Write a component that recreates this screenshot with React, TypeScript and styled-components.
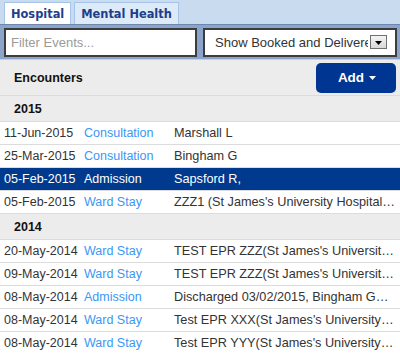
import React from "react";
import styled, { createGlobalStyle } from "styled-components";

const Global = createGlobalStyle`
  html, body { margin: 0; padding: 0; background: #ececec; }
  body { font-family: "Liberation Sans", Arial, sans-serif; }
  * { box-sizing: border-box; }
`;

const Page = styled.div`
  width: 400px;
  height: 353px;
  overflow: hidden;
  background: #ececec;
`;

const TabStrip = styled.div`
  height: 24px;
  background: #c9dbee;
  display: flex;
  align-items: flex-end;
  gap: 3px;
  padding-left: 4px;
`;

const Tab = styled.div<{ $active?: boolean }>`
  height: 22px;
  padding: 0 6px;
  border: 1px solid #a6c3e9;
  border-bottom: none;
  background: ${(p) => (p.$active ? "#ffffff" : "#dcebf7")};
  color: #1f3d8b;
  font-family: "DejaVu Sans", Verdana, sans-serif;
  font-weight: bold;
  font-size: 11.4px;
  display: flex;
  align-items: center;
`;

const FilterBar = styled.div`
  height: 36px;
  background: #8aa4cc;
  border-top: 1px solid #6f86ad;
  border-bottom: 1px solid #cfcfcf;
  display: flex;
  align-items: center;
  gap: 6px;
  padding: 0 3px 0 4px;
`;

const FilterInput = styled.input`
  flex: 0 0 193px;
  width: 193px;
  height: 29px;
  border: 2px solid #3c3c3c;
  background: #fff;
  padding: 0 5px;
  font-family: "Liberation Sans", Arial, sans-serif;
  font-size: 13px;
  color: #333;
  outline: none;
  &::placeholder { color: #9a9a9a; }
`;

const SelectBox = styled.div`
  flex: 1;
  min-width: 0;
  height: 29px;
  border: 2px solid #3c3c3c;
  background: #fff;
  display: flex;
  align-items: center;
  padding: 0 8px 0 10px;
  gap: 2px;
`;

const SelectText = styled.span`
  flex: 1;
  min-width: 0;
  overflow: hidden;
  white-space: nowrap;
  font-size: 13px;
  color: #333;
`;

const ArrowBox = styled.span`
  flex: 0 0 17px;
  width: 17px;
  height: 14px;
  border: 1px solid #707070;
  background: linear-gradient(#f4f4f4, #d8d8d8);
  display: flex;
  align-items: flex-end;
  justify-content: center;
  padding-bottom: 3px;
`;

const Header = styled.div`
  height: 35px;
  display: flex;
  align-items: center;
  justify-content: space-between;
  padding: 0 4px 0 14px;
`;

const Title = styled.span`
  font-weight: bold;
  font-size: 12.5px;
  color: #111;
`;

const AddButton = styled.button`
  width: 80px;
  height: 30px;
  border: none;
  border-radius: 5px;
  background: #003591;
  color: #fff;
  font-family: "Liberation Sans", Arial, sans-serif;
  font-weight: bold;
  font-size: 13.5px;
  display: flex;
  align-items: center;
  justify-content: center;
  gap: 5px;
  padding: 0 0 0 2px;
`;

const List = styled.div`
  border-top: 1px solid #dcdcdc;
`;

const YearRow = styled.div`
  height: 26px;
  border-bottom: 1px solid #dcdcdc;
  background: #ececec;
  display: flex;
  align-items: center;
  padding-left: 14px;
  font-weight: bold;
  font-size: 12.5px;
  color: #111;
`;

const Row = styled.div<{ $selected?: boolean }>`
  height: 23px;
  border-bottom: 1px solid #dcdcdc;
  background: ${(p) => (p.$selected ? "#003a8e" : "#ffffff")};
  color: ${(p) => (p.$selected ? "#ffffff" : "#333333")};
  display: grid;
  grid-template-columns: 80px 90px minmax(0, 1fr);
  align-items: center;
  padding: 0 4px 0 4px;
  font-size: 12.5px;
  white-space: nowrap;
`;

const TypeCell = styled.span<{ $selected?: boolean }>`
  color: ${(p) => (p.$selected ? "#ffffff" : "#3a97f5")};
`;

const Desc = styled.span`
  font-size: 12.7px;
  overflow: hidden;
  text-overflow: ellipsis;
`;

type Ev = { date: string; type: string; desc: string; selected?: boolean };

const groups: { year: string; items: Ev[] }[] = [
  {
    year: "2015",
    items: [
      { date: "11-Jun-2015", type: "Consultation", desc: "Marshall L" },
      { date: "25-Mar-2015", type: "Consultation", desc: "Bingham G" },
      { date: "05-Feb-2015", type: "Admission", desc: "Sapsford R,", selected: true },
      { date: "05-Feb-2015", type: "Ward Stay", desc: "ZZZ1 (St James's University Hospital) Ward" },
    ],
  },
  {
    year: "2014",
    items: [
      { date: "20-May-2014", type: "Ward Stay", desc: "TEST EPR ZZZ(St James's University Hospital)" },
      { date: "09-May-2014", type: "Ward Stay", desc: "TEST EPR ZZZ(St James's University Hospital)" },
      { date: "08-May-2014", type: "Admission", desc: "Discharged 03/02/2015, Bingham G\u2014Consultant" },
      { date: "08-May-2014", type: "Ward Stay", desc: "Test EPR XXX(St James's University Hospital)" },
      { date: "08-May-2014", type: "Ward Stay", desc: "Test EPR YYY(St James's University Hospital)" },
    ],
  },
];

export default function App() {
  return (
    <Page>
      <Global />
      <TabStrip>
        <Tab $active>Hospital</Tab>
        <Tab>Mental Health</Tab>
      </TabStrip>
      <FilterBar>
        <FilterInput placeholder="Filter Events..." />
        <SelectBox>
          <SelectText>Show Booked and Delivered</SelectText>
          <ArrowBox>
            <svg width="7" height="4" viewBox="0 0 7 4">
              <path d="M0 0h7L3.5 4z" fill="#000" />
            </svg>
          </ArrowBox>
        </SelectBox>
      </FilterBar>
      <Header>
        <Title>Encounters</Title>
        <AddButton>
          Add
          <svg width="7" height="4" viewBox="0 0 7 4">
            <path d="M0 0h7L3.5 4z" fill="#fff" />
          </svg>
        </AddButton>
      </Header>
      <List>
        {groups.map((g) => (
          <React.Fragment key={g.year}>
            <YearRow>{g.year}</YearRow>
            {g.items.map((e, i) => (
              <Row key={i} $selected={e.selected}>
                <span>{e.date}</span>
                <TypeCell $selected={e.selected}>{e.type}</TypeCell>
                <Desc>{e.desc}</Desc>
              </Row>
            ))}
          </React.Fragment>
        ))}
      </List>
    </Page>
  );
}
